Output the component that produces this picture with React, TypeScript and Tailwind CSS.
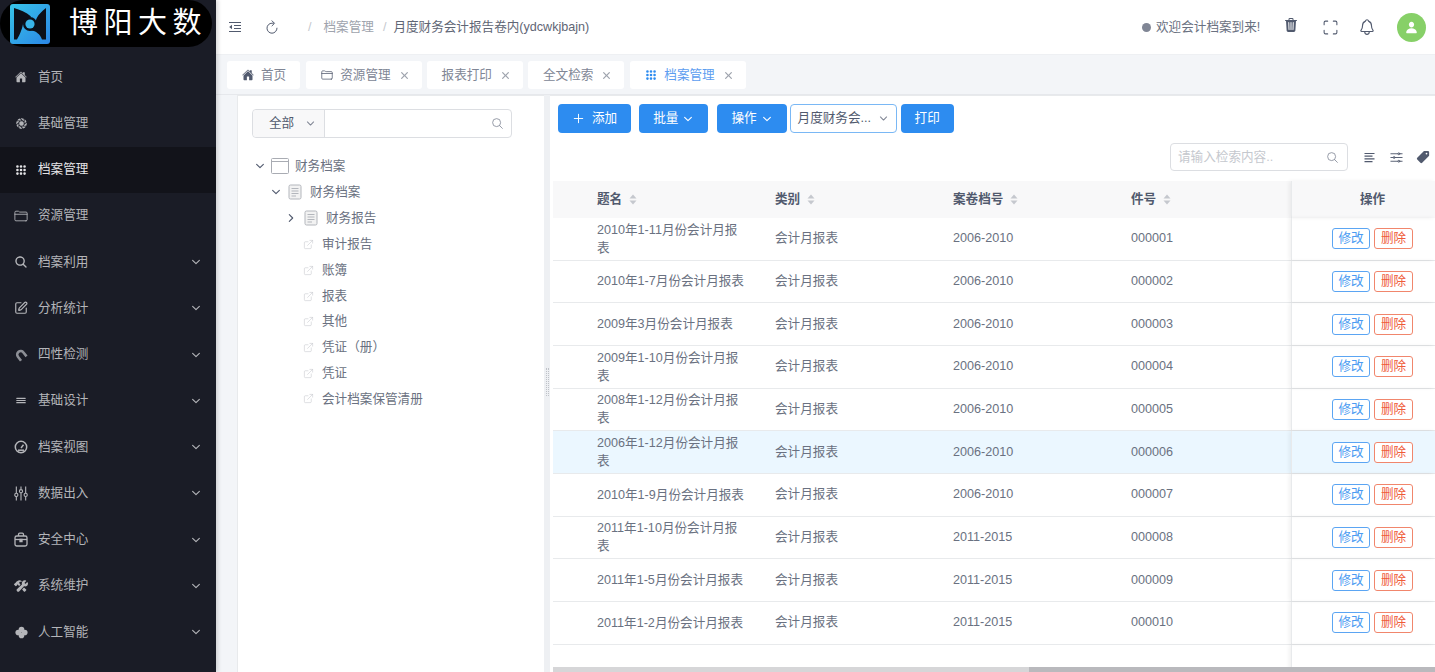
import React from "react";
import {
  IoHome, IoApps, IoFolderOutline, IoSearch, IoSearchOutline, IoReorderThree,
  IoConstruct, IoAperture, IoChevronDown, IoChevronForward, IoClose,
  IoAdd, IoTrash, IoNotificationsOutline, IoPerson, IoPricetag, IoOptionsOutline, IoRefresh,
} from "react-icons/io5";
import { Maximize, ExternalLink, SquarePen } from "lucide-react";

const FONT = "[font-family:'Liberation_Sans','Noto_Sans_CJK_SC',sans-serif]";

function Clover() {
  return (
    <svg width="13" height="13" viewBox="0 0 12 12" fill="currentColor">
      <circle cx="6" cy="3.3" r="2.6" />
      <circle cx="3" cy="6" r="2.6" />
      <circle cx="9" cy="6" r="2.6" />
      <circle cx="6" cy="8.7" r="2.6" />
    </svg>
  );
}

function Magnet() {
  return (
    <svg width="14" height="14" viewBox="0 0 14 14" fill="none" stroke="#8d8f96" strokeWidth="2.6">
      <path d="M3.5 11.5V6.5A3.5 3.5 0 0 1 10.5 6.5V11.5" transform="rotate(-38 7 7)" />
    </svg>
  );
}

function Dial() {
  return (
    <svg width="14" height="14" viewBox="0 0 14 14" fill="none" stroke="currentColor" strokeWidth="1.5">
      <circle cx="7" cy="7" r="5.7" />
      <path d="M7 8 9.5 4.8" />
      <path d="M4 10.2H10" />
    </svg>
  );
}

function Sliders() {
  return (
    <svg width="15" height="17" viewBox="0 0 15 17" fill="none" stroke="currentColor" strokeWidth="1.2">
      <path d="M2.5 1V8M2.5 12V16M7.5 1V4M7.5 8V16M12.5 1V8M12.5 12V16" />
      <circle cx="2.5" cy="10" r="1.7" />
      <circle cx="7.5" cy="6" r="1.7" />
      <circle cx="12.5" cy="10" r="1.7" />
    </svg>
  );
}

function Bag() {
  return (
    <svg width="14" height="15" viewBox="0 0 14 15" fill="none" stroke="currentColor" strokeWidth="1.3">
      <rect x="1" y="4" width="12" height="10" rx="1.8" />
      <path d="M4.5 4V2.4A1.2 1.2 0 0 1 5.7 1.2H8.3A1.2 1.2 0 0 1 9.5 2.4V4" />
      <path d="M1 7.5H13" />
      <path d="M6 7.5H8V9.5H6Z" fill="currentColor" />
    </svg>
  );
}

const menu: [string, React.ReactNode, boolean][] = [
  ["首页", <IoHome className="text-[12px]" />, false],
  ["基础管理", <IoAperture className="text-[13px]" />, false],
  ["档案管理", <IoApps className="text-[12px]" />, false],
  ["资源管理", <IoFolderOutline className="text-[14px]" />, false],
  ["档案利用", <IoSearch className="text-[14px]" />, true],
  ["分析统计", <SquarePen size={14} strokeWidth={2} />, true],
  ["四性检测", <Magnet />, true],
  ["基础设计", <IoReorderThree className="text-[15px]" />, true],
  ["档案视图", <Dial />, true],
  ["数据出入", <Sliders />, true],
  ["安全中心", <Bag />, true],
  ["系统维护", <IoConstruct className="text-[14px]" />, true],
  ["人工智能", <Clover />, true],
];

function Logo() {
  return (
    <svg width="40" height="40" viewBox="0 0 40 40">
      <defs>
        <linearGradient id="lg" x1="0" y1="0" x2="1" y2="1">
          <stop offset="0" stopColor="#37c4e8" />
          <stop offset="1" stopColor="#2b86e6" />
        </linearGradient>
      </defs>
      <rect width="40" height="40" rx="3" fill="url(#lg)" />
      <path d="M4 4C10 6 16 8 21 12.5L13 20C12 26 9 32 7 35.5H4Z" fill="#0c0f18" />
      <path d="M36 4V35.5H32C30 30 26 27 21 26.5L26 20C25 16 27 11 36 4Z" fill="#0c0f18" />
      <circle cx="20" cy="20" r="7" fill="#0c0f18" />
      <circle cx="20" cy="20" r="4.6" fill="#38b4e8" />
    </svg>
  );
}

function Sidebar() {
  return (
    <aside className="w-[216px] shrink-0 h-full bg-[#1a1c26] shadow-[2px_0_4px_rgba(0,0,0,0.15)] z-10 overflow-hidden">
      <div className="h-[54px]">
        <div className="h-[47px] w-[212px] bg-black rounded-[24px] flex items-center pl-[10px]">
          <Logo />
          <span className="ml-[19px] text-white text-[29px] leading-none tracking-[5.5px] whitespace-nowrap">博阳大数</span>
        </div>
      </div>
      {menu.map(([label, icon, arrow]) => {
        const active = label === "档案管理";
        return (
          <div
            key={label}
            className={`h-[46.25px] flex items-center pl-[14px] pr-[14px] text-[12.6px] ${active ? "bg-[#12131a] text-[#e4e4e6]" : "text-[#b4b5b9]"}`}
          >
            <span className="w-[14px] h-[14px] flex items-center justify-center shrink-0">{icon}</span>
            <span className="ml-[10px] flex-1">{label}</span>
            {arrow && <IoChevronDown className="text-[12px] text-[#b4b5b9]" />}
          </div>
        );
      })}
    </aside>
  );
}

function Header() {
  return (
    <header className="h-[55px] shrink-0 bg-white flex items-center border-b border-[#eef0f3] text-[12.6px] text-[#515a6e]">
      <svg className="ml-[12px]" width="14" height="12" viewBox="0 0 14 12" fill="none" stroke="#515a6e" strokeWidth="1.2">
        <path d="M1 1.5H13M6 4.5H13M6 7.5H13M1 10.5H13" />
        <path d="M4 3.7 1.2 6 4 8.3Z" fill="#515a6e" stroke="none" />
      </svg>
      <IoRefresh className="ml-[22px] text-[16px] text-[#515a6e]" />
      <span className="ml-[28px] text-[#c5c8ce]">/</span>
      <span className="ml-[12px] text-[#9ea3ad]">档案管理</span>
      <span className="ml-[9px] text-[#c5c8ce]">/</span>
      <span className="ml-[7px] text-[#5f6675]">月度财务会计报告卷内(ydcwkjbajn)</span>
      <span className="ml-auto w-[9px] h-[9px] rounded-full bg-[#808695]" />
      <span className="ml-[5px] w-[105px] whitespace-nowrap text-[#6a7181]">欢迎会计档案到来!</span>
      <IoTrash className="ml-[22px] mb-[4px] text-[16px] text-[#515a6e]" />
      <Maximize size={17} strokeWidth={1.5} className="ml-[23px] text-[#515a6e]" />
      <IoNotificationsOutline className="ml-[19px] text-[18px] text-[#515a6e]" />
      <span className="ml-[21px] mr-[9px] w-[29px] h-[29px] rounded-full bg-[#87d068] flex items-center justify-center">
        <IoPerson className="text-white text-[13px]" />
      </span>
    </header>
  );
}

function Tabs() {
  const tabs: { l: string; i?: React.ReactNode; x: boolean; on?: boolean; m: string }[] = [
    { l: "首页", i: <IoHome />, x: false, m: "ml-[11px]" },
    { l: "资源管理", i: <IoFolderOutline />, x: true, m: "ml-[6px]" },
    { l: "报表打印", x: true, m: "ml-[5px]" },
    { l: "全文检索", x: true, m: "ml-[5px]" },
    { l: "档案管理", i: <IoApps />, x: true, on: true, m: "ml-[6px]" },
  ];
  return (
    <div className="h-[40px] shrink-0 bg-[#f3f5f8] flex items-start pt-[6px] border-b border-[#e6e8ec]">
      {tabs.map((t) => (
        <div
          key={t.l}
          className={`${t.m} h-[28px] rounded-[3px] bg-white flex items-center pl-[15px] ${t.x ? "pr-[11px]" : "pr-[14px]"} text-[12.6px] ${t.on ? "text-[#5c9df0]" : "text-[#808695]"}`}
        >
          {t.i && <span className={`mr-[7px] w-[12px] text-[12px] ${t.on ? "text-[#2d8cf0]" : "text-[#515a6e]"}`}>{t.i}</span>}
          <span>{t.l}</span>
          {t.x && <IoClose className="ml-[7px] text-[13px] text-[#9ea3ad]" />}
        </div>
      ))}
    </div>
  );
}

function Tree() {
  const leaves = ["审计报告", "账簿", "报表", "其他", "凭证（册）", "凭证", "会计档案保管清册"];
  const Doc = () => (
    <svg width="14" height="16" viewBox="0 0 14 16" fill="#f2f2f2" stroke="#b3b6bc" strokeWidth="1">
      <rect x="1" y="1" width="12" height="14" rx="1.5" />
      <path d="M3.5 4.5H10.5M3.5 7H10.5M3.5 9.5H10.5M3.5 12H8" />
    </svg>
  );
  return (
    <div className="mt-[15px] text-[12.6px] text-[#6a7181]">
      <div className="h-[26px] flex items-center pl-[2px]">
        <IoChevronDown className="text-[12px] text-[#515a6e] w-[12px]" />
        <svg className="ml-[5px]" width="18" height="16" viewBox="0 0 18 16" fill="none" stroke="#a9acb3" strokeWidth="1">
          <rect x="0.5" y="0.5" width="17" height="15" rx="1" />
          <path d="M0.5 3.5H17.5" />
        </svg>
        <span className="ml-[6px]">财务档案</span>
      </div>
      <div className="h-[26px] flex items-center pl-[18px]">
        <IoChevronDown className="text-[12px] text-[#515a6e] w-[12px]" />
        <span className="ml-[6px] flex"><Doc /></span>
        <span className="ml-[8px]">财务档案</span>
      </div>
      <div className="h-[26px] flex items-center pl-[33px]">
        <IoChevronForward className="text-[12px] text-[#515a6e] w-[12px]" />
        <span className="ml-[7px] flex"><Doc /></span>
        <span className="ml-[8px]">财务报告</span>
      </div>
      {leaves.map((l) => (
        <div key={l} className="h-[25.7px] flex items-center pl-[51px] translate-y-[1px]">
          <ExternalLink size={11} strokeWidth={1.2} className="text-[#c4c6cb]" />
          <span className="ml-[8px]">{l}</span>
        </div>
      ))}
    </div>
  );
}

function LeftPanel() {
  return (
    <section className="w-[307px] shrink-0 bg-white border-l border-t border-[#e8eaec] pl-[14px]">
      <div className="mt-[13px] w-[260px] h-[29px] border border-[#dcdee2] rounded-[4px] flex items-center text-[12.6px] text-[#515a6e]">
        <div className="w-[72px] h-full bg-[#f8f8f9] border-r border-[#dcdee2] rounded-l-[4px] flex items-center pl-[16px]">
          <span>全部</span>
          <IoChevronDown className="ml-[11px] text-[11px] text-[#808695]" />
        </div>
        <IoSearchOutline className="ml-auto mr-[7px] text-[13px] text-[#808695]" />
      </div>
      <Tree />
    </section>
  );
}

function Btn({ children }: { children: React.ReactNode }) {
  return (
    <button className="h-[29px] px-[14px] rounded-[4px] bg-[#2d8cf0] text-white text-[12.6px] flex items-center gap-[4px]">
      {children}
    </button>
  );
}

function Sort() {
  return (
    <svg className="ml-[7px]" width="8" height="11" viewBox="0 0 8 11" fill="#c5c8ce">
      <path d="M4 0.5 7.5 4.5H.5Z" />
      <path d="M4 10.5 .5 6.5H7.5Z" />
    </svg>
  );
}

const rows = [
  ["2010年1-11月份会计月报表", "2006-2010", "000001"],
  ["2010年1-7月份会计月报表", "2006-2010", "000002"],
  ["2009年3月份会计月报表", "2006-2010", "000003"],
  ["2009年1-10月份会计月报表", "2006-2010", "000004"],
  ["2008年1-12月份会计月报表", "2006-2010", "000005"],
  ["2006年1-12月份会计月报表", "2006-2010", "000006"],
  ["2010年1-9月份会计月报表", "2006-2010", "000007"],
  ["2011年1-10月份会计月报表", "2011-2015", "000008"],
  ["2011年1-5月份会计月报表", "2011-2015", "000009"],
  ["2011年1-2月份会计月报表", "2011-2015", "000010"],
];

const OP = "w-[144px] shrink-0 border-l border-[#e8eaec] shadow-[-2px_0_4px_rgba(0,0,0,0.06)] flex items-center";

function RightPanel() {
  return (
    <section className="flex-1 min-w-0 bg-white border-t border-[#e8eaec] flex flex-col pl-[2px] relative overflow-hidden">
      <div className="h-[37px] mt-[4px] flex items-center pl-[6px] shrink-0">
        <Btn><IoAdd className="text-[15px] -ml-[1px] mr-[2px]" />添加</Btn>
        <div className="ml-[8px]"><Btn>批量<IoChevronDown className="text-[12px]" /></Btn></div>
        <div className="ml-[9px]"><Btn>操作<IoChevronDown className="text-[12px]" /></Btn></div>
        <div className="ml-[3px] w-[107px] h-[29px] border border-[#7ab8f5] rounded-[4px] flex items-center pl-[7px] pr-[7px] text-[12.6px] text-[#515a6e] whitespace-nowrap">
          <span className="flex-1">月度财务会...</span>
          <IoChevronDown className="text-[11px] text-[#808695] shrink-0" />
        </div>
        <div className="ml-[4px]"><Btn>打印</Btn></div>
      </div>
      <div className="h-[28px] mt-[6px] flex items-center pl-[618px] shrink-0">
        <div className="w-[178px] h-[28px] border border-[#dcdee2] rounded-[4px] flex items-center pl-[7px] pr-[8px] text-[12.6px] text-[#c5c8ce]">
          <span className="flex-1">请输入检索内容..</span>
          <IoSearchOutline className="text-[13px] text-[#808695]" />
        </div>
        <svg className="ml-[16px] shrink-0" width="11" height="11" viewBox="0 0 11 11" stroke="#515a6e" strokeWidth="1.2">
          <path d="M0.5 1.5H10.5M0.5 4.2H8.5M0.5 6.9H10.5M0.5 9.6H8.5" />
        </svg>
        <IoOptionsOutline className="ml-[14px] text-[15px] text-[#515a6e] shrink-0" />
        <IoPricetag className="ml-[12px] text-[14px] text-[#515a6e] shrink-0" />
      </div>
      <div className="mt-[10px] flex-1 min-h-0 flex flex-col ml-[1px] text-[12.6px] text-[#6a7181]">
        <div className="h-[37px] shrink-0 bg-[#f8f8f9] flex items-stretch font-bold text-[#515a6e]">
          <div className="w-[222px] pl-[44px] flex items-center shrink-0">题名<Sort /></div>
          <div className="w-[178px] flex items-center shrink-0">类别<Sort /></div>
          <div className="w-[178px] flex items-center shrink-0">案卷档号<Sort /></div>
          <div className="w-[160px] flex items-center shrink-0">件号<Sort /></div>
          <div className={`${OP} pl-[68px]`}>操作</div>
        </div>
        {rows.map((r, i) => (
          <div key={r[2]} className={`h-[42.67px] shrink-0 flex items-stretch border-b border-[#e8eaec] ${i === 5 ? "bg-[#ebf7ff]" : ""}`}>
            <div className="w-[222px] pl-[44px] pr-[28px] leading-[18px] shrink-0 flex items-center">{r[0]}</div>
            <div className="w-[178px] shrink-0 flex items-center">会计月报表</div>
            <div className="w-[178px] shrink-0 flex items-center">{r[1]}</div>
            <div className="w-[160px] shrink-0 flex items-center">{r[2]}</div>
            <div className={`${OP} pl-[40px] gap-[4px]`}>
              <span className="w-[38px] h-[21px] border border-[#5ba5f3] rounded-[3px] text-[#4a9bf2] text-[12.6px] flex items-center justify-center bg-white">修改</span>
              <span className="w-[39px] h-[21px] border border-[#f1866c] rounded-[3px] text-[#ef5b38] text-[12.6px] flex items-center justify-center bg-white">删除</span>
            </div>
          </div>
        ))}
        <div className="flex-1 flex justify-end">
          <div className={OP} />
        </div>
      </div>
      <div className="absolute left-[3px] right-0 bottom-0 h-[5px] flex">
        <div className="w-[476px] bg-[#d6d6d8]" />
        <div className="flex-1 bg-[#b9b9bd]" />
      </div>
    </section>
  );
}

export default function App() {
  return (
    <div className={`h-screen w-full flex overflow-hidden bg-[#f3f5f8] ${FONT}`}>
      <Sidebar />
      <main className="flex-1 min-w-0 flex flex-col">
        <Header />
        <Tabs />
        <div className="flex-1 min-h-0 flex pl-[21px]">
          <LeftPanel />
          <div className="w-[6px] shrink-0 bg-[#eef0f3] flex items-center justify-center">
            <div className="w-[3px] h-[28px] mt-[-4px] border-x border-dotted border-[#bfc2c8]" />
          </div>
          <RightPanel />
        </div>
      </main>
    </div>
  );
}
